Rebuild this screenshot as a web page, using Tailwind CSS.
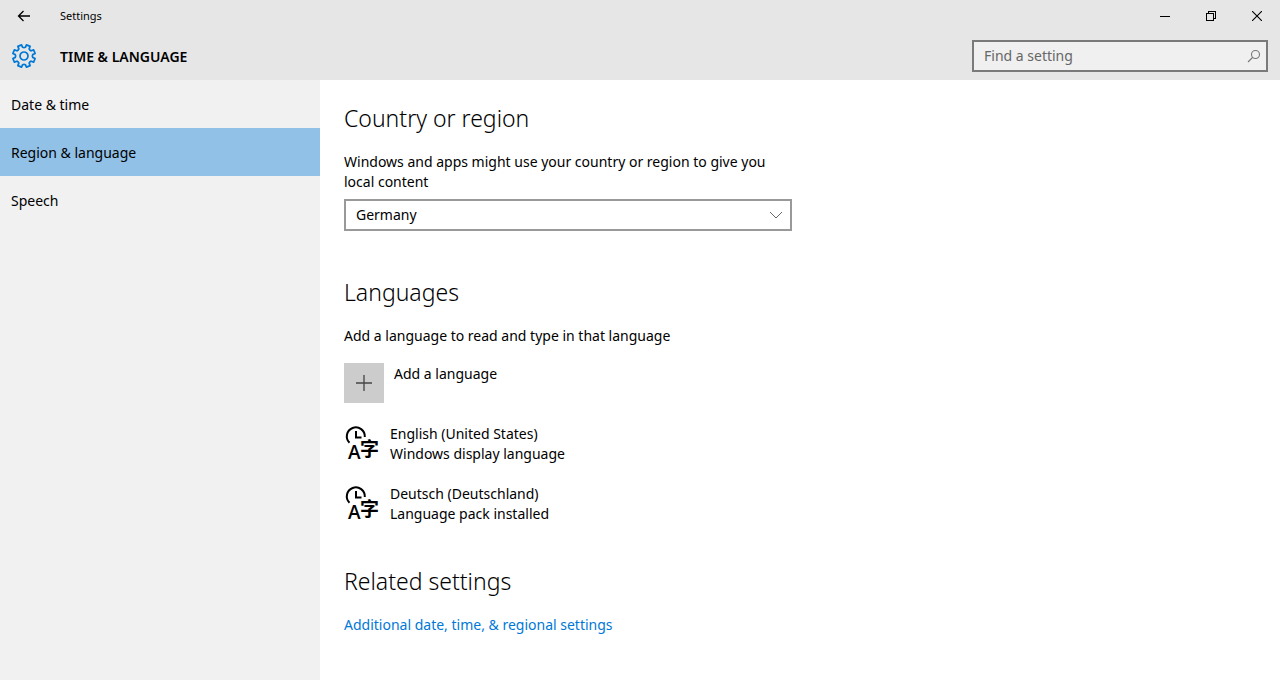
<!DOCTYPE html>
<html lang="en">
<head>
<meta charset="utf-8">
<title>Settings</title>
<script src="https://cdn.jsdelivr.net/npm/@tailwindcss/browser@4"></script>
</head>
<body class="min-h-screen flex flex-col bg-white text-black font-['Noto_Sans','Open_Sans',sans-serif] text-[14px] leading-5">
<header class="bg-[#e6e6e6]">
  <div class="flex h-8 items-center">
    <button aria-label="Back" class="flex h-8 w-12 items-center justify-center">
      <svg width="14" height="12" viewBox="0 0 14 12" fill="none" stroke="#000" stroke-width="1.3"><path d="M13 6H1.5M6.500 1L1.500 6l5 5"/></svg>
    </button>
    <span class="pl-3 text-[11px]">Settings</span>
    <div class="ml-auto flex">
      <button aria-label="Minimize" class="flex h-8 w-[46px] items-center justify-center"><svg width="10" height="10" shape-rendering="crispEdges"><path d="M0 5.500h10" stroke="#000"/></svg></button>
      <button aria-label="Restore" class="flex h-8 w-[46px] items-center justify-center"><svg width="10" height="10" fill="none" stroke="#000" shape-rendering="crispEdges"><path d="M.5 2.500h7v7h-7zM2.500 2.500v-2h7v7h-2"/></svg></button>
      <button aria-label="Close" class="flex h-8 w-[46px] items-center justify-center"><svg width="10" height="10" stroke="#000" stroke-width="1.1"><path d="M0 0l10 10M10 0L0 10"/></svg></button>
    </div>
  </div>
  <div class="flex h-12 items-center pr-3">
    <div class="flex w-12 justify-center">
      <svg width="26" height="26" viewBox="-13 -13 26 26" fill="none" stroke="#0078d7" stroke-width="1.7" stroke-linejoin="round">
        <circle r="4"/>
        <path d="M-1.380-8.690Q0-8 1.380-8.690L2.470-11.130 6.130-9.610 5.170-7.120Q5.660-5.660 7.120-5.170L9.610-6.130 11.130-2.470 8.690-1.380Q8 0 8.690 1.380L11.130 2.470 9.610 6.130 7.120 5.170Q5.660 5.660 5.170 7.120L6.130 9.610 2.470 11.130 1.380 8.690Q0 8-1.380 8.690L-2.470 11.130-6.130 9.610-5.170 7.120Q-5.660 5.660-7.120 5.170L-9.610 6.130-11.130 2.470-8.690 1.380Q-8 0-8.690-1.380L-11.130-2.470-9.610-6.130-7.120-5.170Q-5.660-5.660-5.170-7.120L-6.130-9.610-2.470-11.130Z"/>
      </svg>
    </div>
    <h1 class="pt-0.5 pl-3 text-[14px] font-semibold">TIME &amp; LANGUAGE</h1>
    <label class="ml-auto flex h-8 w-[296px] items-center border-2 border-[#7a7a7a] bg-[#f0f0f0] pl-[10px] pr-[5px]">
      <input type="text" aria-label="Find a setting" placeholder="Find a setting" class="min-w-0 flex-1 bg-transparent outline-none placeholder:text-[#666]">
      <svg width="14" height="14" fill="none" stroke="#777" stroke-width="1.1"><circle cx="8.500" cy="5.500" r="4"/><path d="M5.500 8.500L1 13"/></svg>
    </label>
  </div>
</header>
<div class="flex flex-1">
  <nav class="w-80 shrink-0 bg-[#f1f1f1]">
    <a href="#date" class="flex h-12 items-center px-[11px] pt-0.5">Date &amp; time</a>
    <a href="#region" aria-current="page" class="flex h-12 items-center bg-[#91c1e7] px-[11px] pt-0.5">Region &amp; language</a>
    <a href="#speech" class="flex h-12 items-center px-[11px] pt-0.5">Speech</a>
  </nav>
  <main class="min-w-0 flex-1 px-6 pt-[22px] pb-8">
    <section class="max-w-[448px]">
      <h2 class="text-[23px] leading-8 font-light">Country or region</h2>
      <label for="country" class="mt-[18px] block">Windows and apps might use your country or region to give you local content</label>
      <div class="relative mt-[7px]">
        <select id="country" class="block h-8 w-full appearance-none border-2 border-[#999] bg-white pl-[10px]"><option>Germany</option></select>
        <svg class="pointer-events-none absolute top-3 right-[9px]" width="14" height="8" fill="none" stroke="#666" stroke-width="1"><path d="M1 1l6 6 6-6"/></svg>
      </div>
    </section>
    <section class="mt-[45px]">
      <h2 class="text-[23px] leading-8 font-light">Languages</h2>
      <p class="mt-[18px]">Add a language to read and type in that language</p>
      <button class="mt-[17px] flex items-start gap-[10px]">
        <span class="flex size-10 items-center justify-center bg-[#ccc]"><svg width="16" height="16" stroke="#444" stroke-width="1.300"><path d="M8 0v16M0 8h16"/></svg></span>
        <span class="pt-px">Add a language</span>
      </button>
      <ul class="mt-[21px] flex flex-col gap-5">
        <li class="flex items-start gap-[10px]">
          <svg class="overflow-visible" width="36" height="40" viewBox="0 0 36 40" aria-hidden="true">
            <path d="M5.500 18.800A9 9 0 1 1 20.800 13M12 7v6.500h5.500" fill="none" stroke="#000" stroke-width="2"/>
            <text x="4" y="35" font-family="Open Sans" font-weight="600" font-size="19">A</text>
            <text x="16" y="32" font-family="Noto Sans CJK SC" font-weight="700" font-size="19">字</text>
          </svg>
          <div><p>English (United States)</p><p>Windows display language</p></div>
        </li>
        <li class="flex items-start gap-[10px]">
          <svg class="overflow-visible" width="36" height="40" viewBox="0 0 36 40" aria-hidden="true">
            <path d="M5.500 18.800A9 9 0 1 1 20.800 13M12 7v6.500h5.500" fill="none" stroke="#000" stroke-width="2"/>
            <text x="4" y="35" font-family="Open Sans" font-weight="600" font-size="19">A</text>
            <text x="16" y="32" font-family="Noto Sans CJK SC" font-weight="700" font-size="19">字</text>
          </svg>
          <div><p>Deutsch (Deutschland)</p><p>Language pack installed</p></div>
        </li>
      </ul>
    </section>
    <section class="mt-[41px]">
      <h2 class="text-[23px] leading-8 font-light">Related settings</h2>
      <a href="#additional" class="mt-[18px] block text-[#0078d7]">Additional date, time, &amp; regional settings</a>
    </section>
  </main>
</div>
</body>
</html>
